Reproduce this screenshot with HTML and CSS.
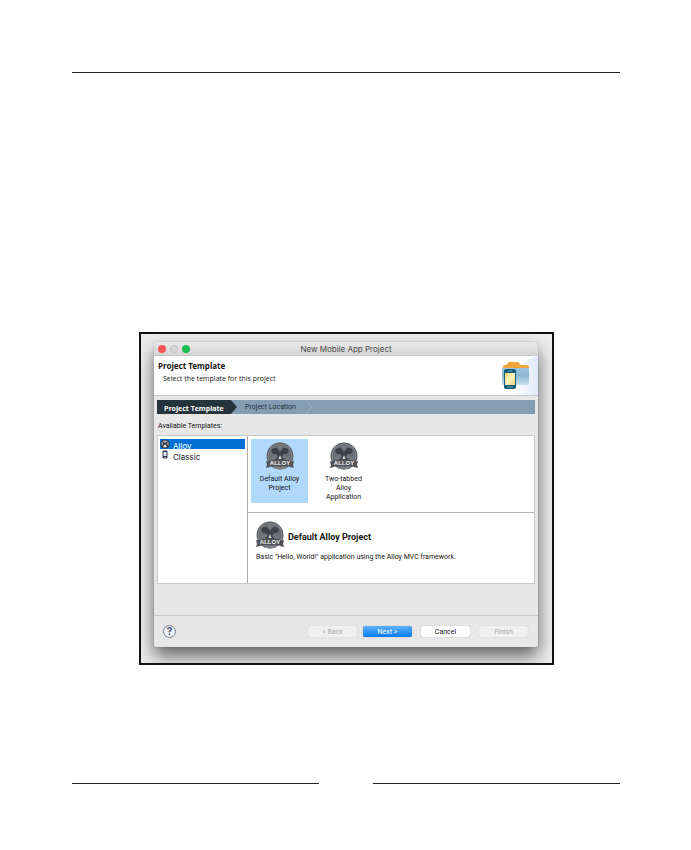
FILE: index.html
```html
<!DOCTYPE html>
<html lang="en">
<head>
<meta charset="utf-8">
<meta name="viewport" content="width=device-width, initial-scale=1">
<title>New Mobile App Project</title>
<link rel="stylesheet" href="styles.css">
</head>
<body>
<svg class="defs" aria-hidden="true">
  <symbol id="alloy" viewBox="0 0 28 28">
    <circle cx="14" cy="14" r="13.5" fill="#5b5f64"/>
    <circle cx="14" cy="14" r="12.3" fill="#8e9194"/>
    <circle cx="14" cy="14" r="11.6" fill="#6b6f73"/>
    <path d="M14 3v9M6 12l8-8 8 8M5 17l9-5 9 5" stroke="#7f8386" fill="none"/>
    <path d="M7 6l4 0 3 4 3-4 4 0 2 3-2 3-3 0-2 3 4 4H8l4-4-2-3-3 0-2-3z" fill="#3f4247"/>
    <path d="M12.5 17l1.5-4 1.5 4z" fill="#ddd"/>
    <path d="M0 19l4 1v5l-4 1 1-3zM28 19l-4 1v5l4 1-1-3z" fill="#4b4f54"/>
    <path d="M2 19q12-3 24 0v6q-12-2-24 0z" fill="#4f5358"/>
    <path d="M8 26q6 2 12 0" stroke="#85898c" fill="none"/>
    <text x="14" y="23" text-anchor="middle" class="badge-text">ALLOY</text>
  </symbol>
</svg>
<header class="page-rule"></header>
<main class="figure">
  <section class="window" aria-label="New Mobile App Project">
    <div class="titlebar">
      <div class="lights"><i class="close"></i><i class="minimize"></i><i class="expand"></i></div>
      <span>New Mobile App Project</span>
    </div>
    <div class="banner">
      <div>
        <h1>Project Template</h1>
        <p>Select the template for this project</p>
      </div>
      <svg class="banner-art" viewBox="0 -1 42 39" aria-hidden="true">
        <defs>
          <linearGradient id="glow" x1="0" x2="1"><stop offset=".15" stop-color="#fff"/><stop offset="1" stop-color="#dfe8fa"/></linearGradient>
          <linearGradient id="folder" x2="0" y2="1"><stop stop-color="#9cc5df"/><stop offset=".45" stop-color="#8cb7d1"/><stop offset="1" stop-color="#c5e1ee"/></linearGradient>
          <linearGradient id="screen" x2="1" y2="1"><stop stop-color="#f7d777"/><stop offset=".5" stop-color="#fff2bc"/><stop offset="1" stop-color="#edcf81"/></linearGradient>
        </defs>
        <path d="M14 38C8 24 25 3 42-1v39z" fill="url(#glow)"/>
        <path d="M7 11V9q0-1 3-1l3-3h9l3 3h5q3 0 3 2v1z" fill="#efa53e"/>
        <rect x="6" y="11" width="27" height="17" rx="1" fill="url(#folder)"/>
        <rect x="8" y="12" width="12" height="20" rx="2" fill="#145b78"/>
        <rect x="9" y="16" width="10" height="12" fill="url(#screen)"/>
        <path d="M12 14h4M11 30h6" stroke="#72a3b5"/>
      </svg>
    </div>
    <div class="content">
      <nav class="steps">
        <svg viewBox="0 0 160 14" aria-hidden="true"><path d="M0 0h74l6 7-6 7H0z" fill="#26353d"/><path d="M149 0l6 7-6 7" fill="none" stroke="#a0b2c1"/></svg>
        <b>Project Template</b><span>Project Location</span>
      </nav>
      <h2 class="label">Available Templates:</h2>
      <div class="browser">
        <ul class="categories">
          <li class="selected"><svg viewBox="0 0 10 10" aria-hidden="true"><circle cx="5" cy="5" r="4.5" fill="#34383c"/><circle cx="5" cy="5" r="3.6" fill="#b0b3b6"/><path d="M2 2l3 2 3-2-1 3 2 3H1l2-3z" fill="#35393d"/><path d="M3 8l2-3 2 3z" fill="#eee"/></svg><span>Alloy</span></li>
          <li><svg viewBox="0 0 10 10" aria-hidden="true"><rect x="2.5" y=".5" width="5" height="8" rx="1" fill="#35374c"/><path d="M3.5 2h3v4h-3z" fill="#e4e7f4"/><path d="M4.5 7.5h1" stroke="#fff"/></svg><span>Classic</span></li>
        </ul>
        <div class="details">
          <div class="templates">
            <button class="template chosen"><svg><use href="#alloy"/></svg><span>Default Alloy<br>Project</span></button>
            <button class="template"><svg><use href="#alloy"/></svg><span>Two-tabbed<br>Alloy<br>Application</span></button>
          </div>
          <article class="summary">
            <div class="summary-title"><svg><use href="#alloy"/></svg><h3>Default Alloy Project</h3></div>
            <p>Basic "Hello, World!" application using the Alloy MVC framework.</p>
          </article>
        </div>
      </div>
    </div>
    <footer class="actions">
      <button class="help" aria-label="Help">?</button>
      <div class="buttons">
        <div class="pager">
          <button disabled>&lt; Back</button>
          <button class="primary">Next &gt;</button>
        </div>
        <button class="cancel">Cancel</button>
        <button disabled>Finish</button>
      </div>
    </footer>
  </section>
</main>
<footer class="page-end"><hr><hr></footer>
</body>
</html>
```
FILE: styles.css
```css
* { box-sizing: border-box; }
body { margin: 0; padding: 72px 71px 0 72px; background: #fff; color: #151515; font: 7px/9px Roboto, sans-serif; }
h1, h2, h3, p, ul { margin: 0; padding: 0; }
button { border: 0; padding: 0; background: none; color: inherit; font: inherit; }
.defs { display: none; }
.badge-text { fill: #f2f2f2; font: bold 6px "Liberation Sans", sans-serif; }
.page-rule { height: 1px; background: #222; }
.figure { margin: 259px 66px 0 67px; padding: 8px 14px 16px 13px; border: 2px solid #111; background: #ededed; overflow: hidden; }
.window { border-radius: 4px 4px 2px 2px; background: #e7e7e7; box-shadow: 0 9px 18px rgb(0 0 0 / 60%), 0 0 1px #888; overflow: hidden; }
.titlebar { display: grid; grid-template-columns: 1fr auto 1fr; align-items: center; height: 14px; padding-top: 1px; border-bottom: 1px solid #c9c9c9; background: linear-gradient(#e9e9e9, #d5d5d5); color: #484848; font-family: Inter, sans-serif; font-size: 8px; }
.lights { display: flex; gap: 4px; padding-left: 4px; }
.lights i { width: 8px; height: 8px; border-radius: 50%; }
.close { background: #fa5555; }
.minimize { border: 1px solid #c4c4c4; background: #d7d7d7; }
.expand { background: #19bd55; }
.banner { display: flex; justify-content: space-between; height: 40px; border-bottom: 1px solid #c8c8c8; background: #fff; font-family: "Open Sans", sans-serif; }
.banner h1 { padding: 5px 0 0 4px; font-family: "Noto Sans", sans-serif; font-size: 8px; line-height: 10px; }
.banner p { padding: 3px 0 0 9px; }
.banner-art { width: 42px; height: 39px; }
.content { padding: 4px 3px 0; }
.steps { display: flex; position: relative; align-items: center; height: 14px; background: #849db3; }
.steps svg { position: absolute; left: 0; top: 0; width: 160px; height: 100%; }
.steps b, .steps span { position: relative; }
.steps b { width: 88px; padding: 2px 0 0 7px; color: #fff; font-family: "Open Sans", sans-serif; }
.steps span { color: #233240; }
.label { padding: 8px 1px 4px; font-size: 7px; line-height: 9px; font-weight: 400; }
.browser { display: grid; grid-template-columns: 90px 1fr; height: 149px; border: 1px solid #c8c8c8; background: #fff; }
.categories { padding: 3px 2px 0; border-right: 1px solid #aaa; list-style: none; font-family: Inter, sans-serif; font-size: 8px; line-height: 10px; }
.categories li { display: flex; gap: 3px; height: 11px; padding-top: 1px; }
.categories svg { width: 10px; height: 10px; }
.categories span { padding-top: 2px; }
.categories .selected { height: 10px; padding-top: 0; background: #0070d7; color: #fff; }
.details { display: flex; flex-direction: column; }
.templates { display: flex; gap: 7px; height: 77px; padding: 3px; border-bottom: 1px solid #b5b5b5; }
.template { display: flex; flex-direction: column; align-items: center; width: 57px; height: 64px; padding-top: 3px; line-height: 9px; }
.template svg, .summary svg { width: 28px; height: 28px; }
.template span { padding-top: 5px; }
.chosen { background: #b1d8fd; }
.summary { padding: 8px; }
.summary-title { display: flex; align-items: center; gap: 4px; }
.summary h3 { padding-top: 3px; font-size: 9px; line-height: 12px; }
.summary p { padding-top: 4px; }
.actions { display: flex; justify-content: space-between; align-items: center; height: 32px; margin-top: 31px; padding: 0 10px 0 9px; border-top: 1px solid #c8c8c8; }
.help { width: 13px; height: 13px; border: 1px solid #718095; border-radius: 50%; color: #43536b; background: #eef1f4; font-size: 11px; line-height: 11px; font-weight: 600; }
.buttons { display: flex; gap: 9px; }
.pager { display: flex; gap: 6px; }
.buttons button { width: 49px; height: 11px; padding-top: 1px; border-radius: 2px; background: #fff; box-shadow: 0 0 1px #777; }
.buttons button:disabled { background: #f0f0f0; color: #aaa; box-shadow: 0 0 1px #aaa; }
.buttons .primary { background: linear-gradient(#5db1fa, #087bf2); color: #fff; }
.page-end { display: grid; grid-template-columns: 1fr 1fr; gap: 54px; margin-top: 118px; }
.page-end hr { width: 100%; height: 1px; margin: 0; border: 0; background: #222; }
```
